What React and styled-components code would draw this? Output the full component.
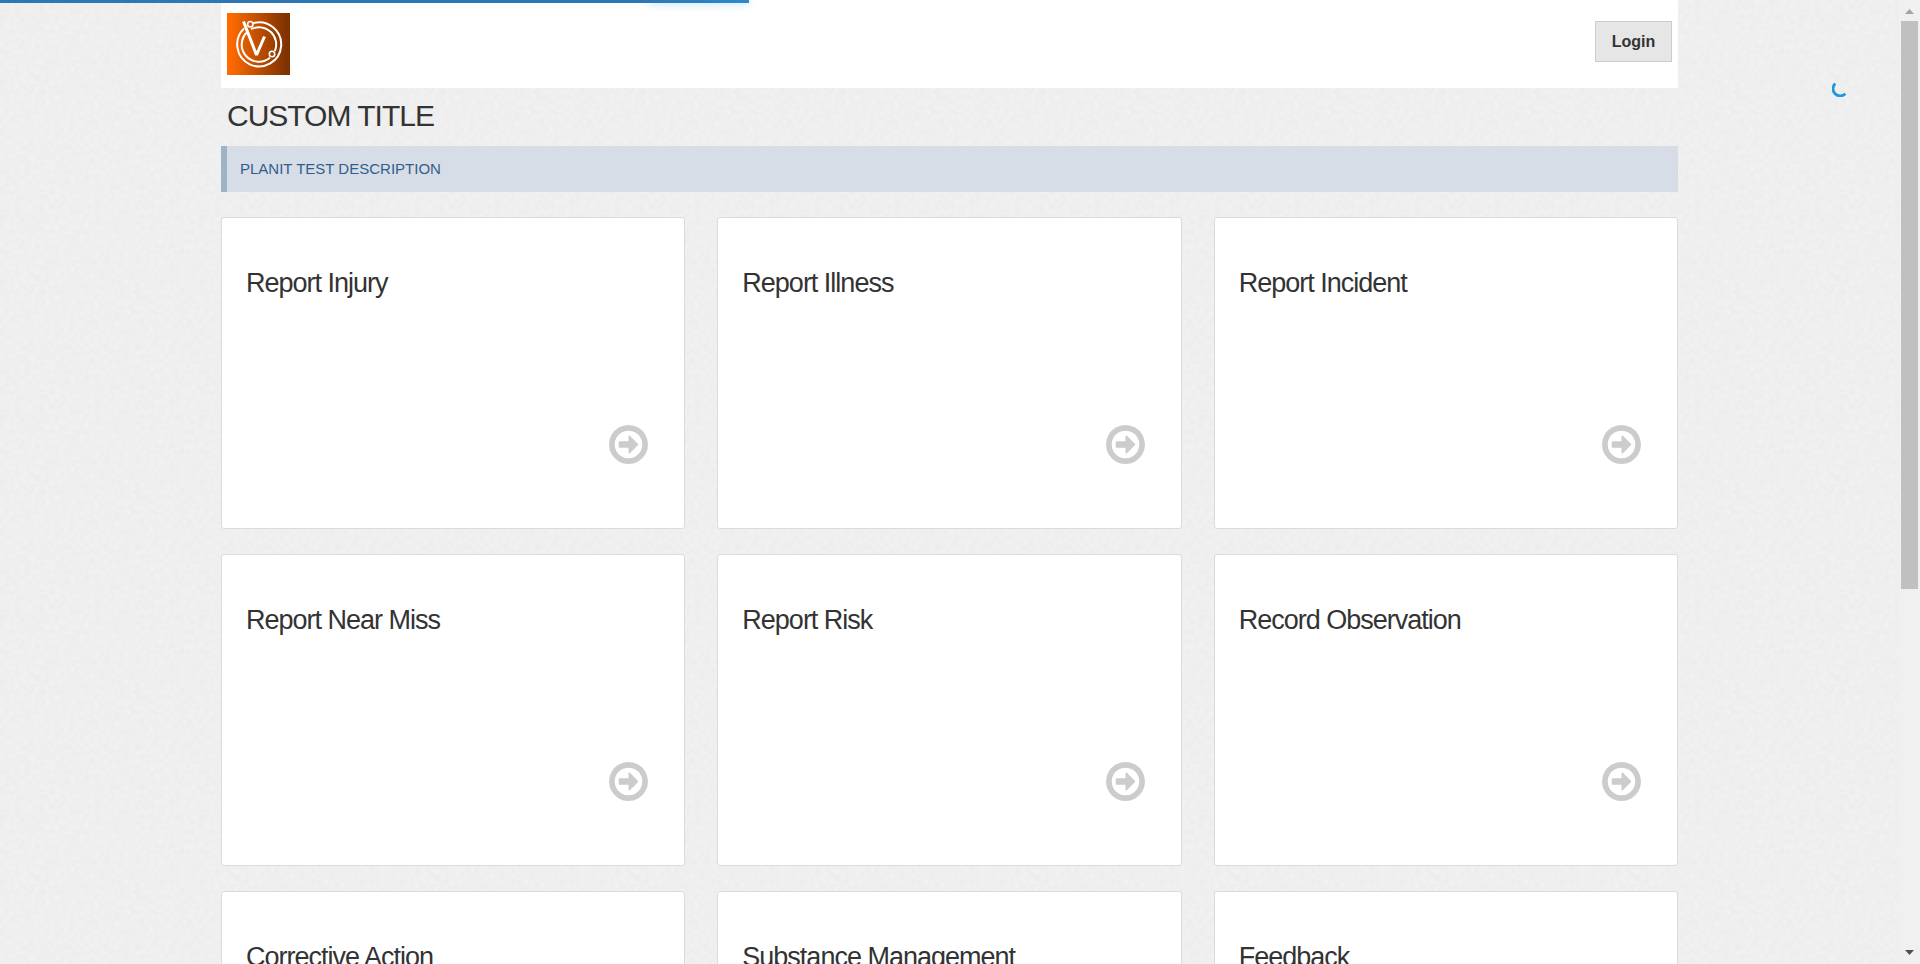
import React from "react";
import styled, { createGlobalStyle } from "styled-components";

const paper = encodeURIComponent(
  '<svg xmlns="http://www.w3.org/2000/svg" width="200" height="200"><filter id="n" x="0" y="0" width="1" height="1"><feTurbulence type="fractalNoise" baseFrequency="0.2" numOctaves="2" stitchTiles="stitch"/><feColorMatrix values="0 0 0 0 0  0 0 0 0 0  0 0 0 0 0  0.035 0 0 0 -0.005"/></filter><rect width="200" height="200" filter="url(#n)"/></svg>'
);

const GlobalStyle = createGlobalStyle`
  *, *::before, *::after { box-sizing: border-box; }
  html, body, #root { height: 100%; }
  body {
    margin: 0;
    overflow: hidden;
    background: #f2f2f2 url("data:image/svg+xml,${paper}");
    color: #333;
    font-family: "Liberation Sans", Arial, sans-serif;
  }
`;

const Shell = styled.div`
  display: flex;
  height: 100%;
`;

const Viewport = styled.div`
  flex: 1;
  min-width: 0;
  overflow: hidden;
`;

const Container = styled.div`
  width: 100%;
  max-width: 1457px;
  margin: 0 auto;
`;

const Header = styled.header`
  display: flex;
  align-items: flex-start;
  justify-content: space-between;
  height: 88px;
  padding: 13px 6px 0;
  background: #fff;
`;

const LogoLink = styled.a`
  display: block;
  line-height: 0;
`;

const LoginButton = styled.button`
  width: 77px;
  height: 41px;
  margin-top: 8px;
  padding: 0;
  border: 1px solid #ccc;
  background: #e6e6e6;
  color: #333;
  font: bold 16px "Liberation Sans", Arial, sans-serif;
  cursor: pointer;
`;

const PageTitle = styled.h1`
  margin: 0;
  padding: 10px 6px 0;
  height: 58px;
  font-size: 30px;
  font-weight: 400;
  line-height: 36px;
  letter-spacing: -1px;
`;

const Description = styled.p`
  margin: 0 0 25px;
  padding: 13px;
  border-left: 6px solid #9cb4c5;
  background: #d6dde7;
  color: #305d8c;
  font-size: 15px;
  line-height: 20px;
`;

const Grid = styled.main`
  display: grid;
  grid-template-columns: repeat(3, 1fr);
  gap: 25px 32px;
`;

const Card = styled.a`
  display: flex;
  flex-direction: column;
  justify-content: space-between;
  height: 312px;
  padding: 47px 36px 64px 24px;
  border: 1px solid #dbdbdb;
  border-radius: 3px;
  background: #fff;
  color: #333;
  text-decoration: none;
`;

const CardTitle = styled.h2`
  margin: 0;
  font-size: 27px;
  font-weight: 400;
  line-height: 36px;
  letter-spacing: -1px;
`;

const ArrowIcon = styled.svg`
  display: block;
  align-self: flex-end;
  width: 39px;
  height: 39px;
  fill: #ccc;
`;

const Progress = styled.div`
  position: fixed;
  top: 0;
  left: 0;
  z-index: 2;
  width: 39%;
  height: 3px;
  background: linear-gradient(to right, #2e77b5 calc(100% - 100px), #2a8acb);
`;

const ProgressGlow = styled.div`
  width: 100px;
  height: 3px;
  margin-left: auto;
  box-shadow: 0 0 8px rgba(34, 153, 221, 0.5);
`;

const Spinner = styled.svg`
  position: fixed;
  top: 81px;
  right: 72px;
  z-index: 2;
  width: 16px;
  height: 16px;
`;

const ScrollTrack = styled.div`
  display: flex;
  flex-direction: column;
  align-items: center;
  width: 21px;
  padding: 9px 0 9px;
  background: #f0f0f0;
`;

const ScrollThumb = styled.div`
  flex: 0 0 60%;
  width: 17px;
  margin-top: 7px;
  background: #c0c0c0;
`;

const ScrollArrow = styled.svg`
  display: block;
  width: 9px;
  height: 5px;
  flex: none;
  fill: ${(p) => p.$color};
  margin-top: ${(p) => (p.$end ? "auto" : "0")};
`;

const cards = [
  "Report Injury",
  "Report Illness",
  "Report Incident",
  "Report Near Miss",
  "Report Risk",
  "Record Observation",
  "Corrective Action",
  "Substance Management",
  "Feedback",
];

function Logo() {
  return (
    <svg width="63" height="62" viewBox="0 0 63 62" role="img" aria-label="Home">
      <defs>
        <linearGradient id="logo-fill" x1="0" x2="1" y1="0" y2="0">
          <stop offset="0.05" stopColor="#ff6a00" />
          <stop offset="0.95" stopColor="#7e3200" />
        </linearGradient>
      </defs>
      <rect width="63" height="62" fill="url(#logo-fill)" />
      <g fill="none" stroke="#fff">
        <path strokeWidth="2" d="M26 10.3A22 22 0 1 1 17 15.5" />
        <path strokeWidth="2" d="M24 16.2A17.2 17.2 0 0 1 47.8 38.2M42.9 44.8A17.2 17.2 0 0 1 20.5 18.7" />
        <circle cx="23.3" cy="11.2" r="2.7" strokeWidth="1.6" />
        <circle cx="45" cy="41" r="2.7" strokeWidth="1.6" />
        <path strokeWidth="3" strokeLinejoin="bevel" d="M16.5 8.5L29.5 42L37.5 23.5" />
      </g>
    </svg>
  );
}

export default function App() {
  return (
    <>
      <GlobalStyle />
      <Progress role="progressbar" aria-label="Loading" aria-valuenow={39}>
        <ProgressGlow />
      </Progress>
      <Spinner viewBox="0 0 16 16" aria-hidden="true">
        <path d="M3.2 2.5A6.3 6.3 0 0 0 13.4 12.8" fill="none" stroke="#2299dd" strokeWidth="2.8" />
      </Spinner>
      <Shell>
        <Viewport>
          <Container>
            <Header>
              <LogoLink href="#"><Logo /></LogoLink>
              <LoginButton type="button">Login</LoginButton>
            </Header>
            <PageTitle>CUSTOM TITLE</PageTitle>
            <Description>PLANIT TEST DESCRIPTION</Description>
            <Grid>
              {cards.map((title) => (
                <Card key={title} href="#">
                  <CardTitle>{title}</CardTitle>
                  <ArrowIcon viewBox="0 128 1536 1536" aria-hidden="true">
                    <path d="M1152 896q0 14-9 23l-320 320q-9 9-23 9-13 0-22.5-9.5T768 1216v-192H416q-13 0-22.5-9.5T384 992V800q0-13 9.5-22.5T416 768h352V576q0-14 9-23t23-9q12 0 24 10l319 319q9 9 9 23zm160 0q0-148-73-273t-198-198-273-73-273 73-198 198-73 273 73 273 198 198 273 73 273-73 198-198 73-273zm224 0q0 209-103 385.5T1153.5 1561 768 1664t-385.5-103T103 1281.5 0 896t103-385.5T382.5 231 768 128t385.5 103T1433 510.5 1536 896z" />
                  </ArrowIcon>
                </Card>
              ))}
            </Grid>
          </Container>
        </Viewport>
        <ScrollTrack aria-hidden="true">
          <ScrollArrow $color="#a3a3a3" viewBox="0 0 9 5"><path d="M0 5L4.5 0L9 5Z" /></ScrollArrow>
          <ScrollThumb />
          <ScrollArrow $end $color="#505050" viewBox="0 0 9 5"><path d="M0 0H9L4.5 5Z" /></ScrollArrow>
        </ScrollTrack>
      </Shell>
    </>
  );
}
